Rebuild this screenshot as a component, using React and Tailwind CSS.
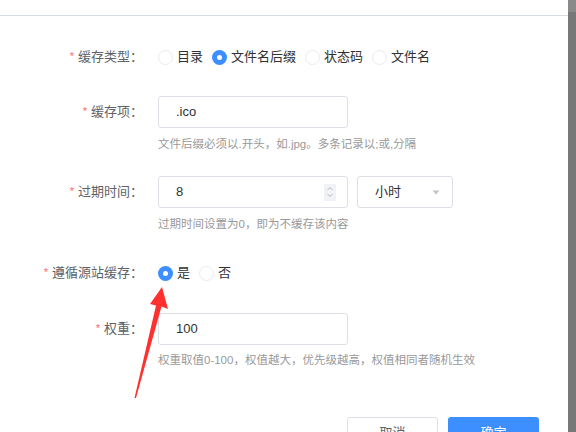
import React from 'react';

const cjk = { fontFamily: '"Liberation Sans", "Noto Sans CJK SC", sans-serif' };

const Label = ({ text }) => (
  <div className="w-[143px] shrink-0 flex justify-end items-center text-[13px] text-[#606266]">
    <span className="text-[#f56c6c] text-[11px] mr-[4px] -mt-[2px]">*</span>
    <span>{text}：</span>
  </div>
);

const Radio = ({ label, checked }) => (
  <div className="flex items-center mr-[9px]">
    {checked ? (
      <span className="w-[15px] h-[15px] rounded-full bg-[#3d8eff] flex items-center justify-center">
        <span className="w-[5px] h-[5px] rounded-full bg-white" />
      </span>
    ) : (
      <span className="w-[15px] h-[15px] rounded-full border border-[#e8ebf0] bg-white" />
    )}
    <span className="ml-[4px] text-[13px] text-[#303133]">{label}</span>
  </div>
);

const Help = ({ children, className = '' }) => (
  <div className={`ml-[158px] text-[11.5px] leading-[16px] text-[#999999] ${className}`}>{children}</div>
);

const TextInput = ({ value, children }) => (
  <div className="ml-[15px] w-[190px] h-[32px] border border-[#dcdfe6] rounded-[3px] flex items-center justify-between pl-[17px] pr-[11px] text-[13px] text-[#303133]">
    <span>{value}</span>
    {children}
  </div>
);

const App = () => {
  return (
    <div className="w-[576px] h-[432px] relative overflow-hidden bg-white flex" style={cjk}>
      <div className="flex-1">
        <div className="h-[16px] border-b border-[#d3dae4]" />

        {/* 缓存类型 */}
        <div className="flex items-center h-[32px] mt-[25px]">
          <Label text="缓存类型" />
          <div className="ml-[15px] flex items-center">
            <Radio label="目录" />
            <Radio label="文件名后缀" checked />
            <Radio label="状态码" />
            <Radio label="文件名" />
          </div>
        </div>

        {/* 缓存项 */}
        <div className="flex items-center mt-[23px]">
          <Label text="缓存项" />
          <TextInput value=".ico" />
        </div>
        <Help className="mt-[8px]">文件后缀必须以.开头，如.jpg。多条记录以;或,分隔</Help>

        {/* 过期时间 */}
        <div className="flex items-center mt-[24px]">
          <Label text="过期时间" />
          <TextInput value="8">
            <div className="w-[12px] h-[17px] bg-[#f0f2f5] flex flex-col items-center justify-center">
              <svg width="8" height="14" viewBox="0 0 8 14" fill="none" stroke="#b4b8c0" strokeWidth="1">
                <path d="M1.5 5 L4 2.5 L6.5 5" />
                <path d="M1.5 9 L4 11.5 L6.5 9" />
              </svg>
            </div>
          </TextInput>
          <div className="ml-[9px] w-[96px] h-[32px] border border-[#dcdfe6] rounded-[3px] flex items-center justify-between pl-[17px] pr-[12px] text-[13px] text-[#303133]">
            <span>小时</span>
            <svg width="8" height="5" viewBox="0 0 8 5">
              <path d="M0.5 0.5 L7.5 0.5 L4 4.5 Z" fill="#c0c4cc" />
            </svg>
          </div>
        </div>
        <Help className="mt-[8px]">过期时间设置为0，即为不缓存该内容</Help>

        {/* 遵循源站缓存 */}
        <div className="flex items-center h-[32px] mt-[25px]">
          <Label text="遵循源站缓存" />
          <div className="ml-[15px] flex items-center">
            <Radio label="是" checked />
            <Radio label="否" />
          </div>
        </div>

        {/* 权重 */}
        <div className="flex items-center mt-[24px]">
          <Label text="权重" />
          <TextInput value="100" />
        </div>
        <Help className="mt-[7px]">权重取值0-100，权值越大，优先级越高，权值相同者随机生效</Help>

        <div className="flex justify-end gap-[10px] pr-[29px] mt-[49px]">
          <button className="w-[91px] h-[32px] shrink-0 border border-[#dcdfe6] rounded-[3px] bg-white text-[13px] text-[#606266]">取消</button>
          <button className="w-[91px] h-[32px] shrink-0 rounded-[3px] bg-[#3d8eff] text-[13px] text-white">确定</button>
        </div>
      </div>

      <div className="w-[8px] shrink-0 flex flex-col">
        <div className="h-[12px] bg-[#8a8a8a]" />
        <div className="flex-1 bg-[#787878]" />
      </div>

      {/* annotation arrow */}
      <svg className="absolute inset-0 pointer-events-none" width="576" height="432" viewBox="0 0 576 432">
        <polygon
          points="162,287 168,309 161.5,306.5 136,398 134.5,398 156,305.5 150,304"
          fill="#ff3030"
        />
      </svg>
    </div>
  );
};

export default App;
